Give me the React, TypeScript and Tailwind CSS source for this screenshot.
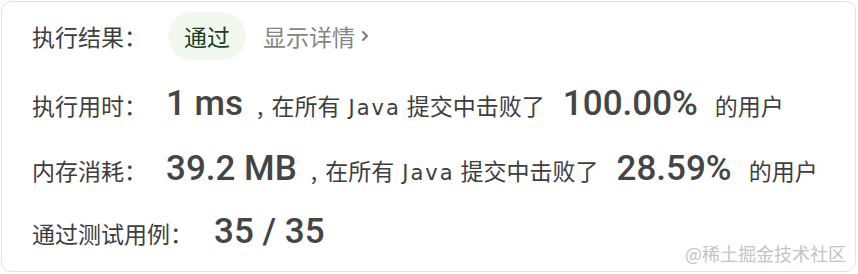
export default function App() {
  const cjk = "font-['Noto_Sans_CJK_SC',sans-serif]";
  const num = "font-['Roboto','Noto_Sans_CJK_SC',sans-serif] text-[35px] font-medium leading-none text-[#454545]";
  const latin = "font-['DejaVu_Sans','Noto_Sans_CJK_SC',sans-serif] text-[21px] tracking-[2px]";

  const Beat = () => (
    <>
      <span className="ml-[14px]">,</span>
      <span className="ml-[8px]">在所有</span>
      <span className={`ml-[8px] ${latin}`}>Java</span>
      <span className="ml-[6px]">提交中击败了</span>
    </>
  );

  return (
    <div className="h-[274px] w-[858px] bg-white p-px">
      <div
        className={`relative h-[271px] w-[855px] rounded-[10px] border border-[#e2e2e2] pl-[30px] pt-[10px] text-[23px] leading-none text-[#3e3e3e] ${cjk}`}
      >
        {/* 执行结果 */}
        <div className="flex h-12 items-center">
          <span>执行结果：</span>
          <span className="ml-[21px] flex h-12 items-center rounded-full bg-[#f1f9ef] px-[16px] text-[#1f3d1f]">
            通过
          </span>
          <span className="ml-[17px] flex items-center text-[#858585]">
            显示详情
            <svg width="12" height="14" viewBox="0 0 12 14" className="ml-[4px]">
              <path d="M4 3l4 4-4 4" fill="none" stroke="#7a7a7a" strokeWidth="2" strokeLinecap="round" strokeLinejoin="round" />
            </svg>
          </span>
        </div>

        {/* 执行用时 */}
        <div className="mt-[19px] flex h-12 items-center">
          <div className="flex items-baseline">
            <span>执行用时：</span>
            <span className={`ml-[19px] ${num}`}>1 ms</span>
            <Beat />
            <span className={`ml-[18px] ${num}`}>100.00%</span>
            <span className="ml-[17px]">的用户</span>
          </div>
        </div>

        {/* 内存消耗 */}
        <div className="mt-[17px] flex h-12 items-center">
          <div className="flex items-baseline">
            <span>内存消耗：</span>
            <span className={`ml-[19px] ${num}`}>39.2 MB</span>
            <Beat />
            <span className={`ml-[18px] ${num}`}>28.59%</span>
            <span className="ml-[17px]">的用户</span>
          </div>
        </div>

        {/* 通过测试用例 */}
        <div className="mt-[15px] flex h-12 items-center">
          <div className="flex items-baseline">
            <span>通过测试用例：</span>
            <span className={`ml-[21px] ${num}`}>35 / 35</span>
          </div>
        </div>

        <span className="absolute bottom-[9px] right-[9px] text-[18px] leading-none text-[#c4c4c4]">
          @稀土掘金技术社区
        </span>
      </div>
    </div>
  );
}
